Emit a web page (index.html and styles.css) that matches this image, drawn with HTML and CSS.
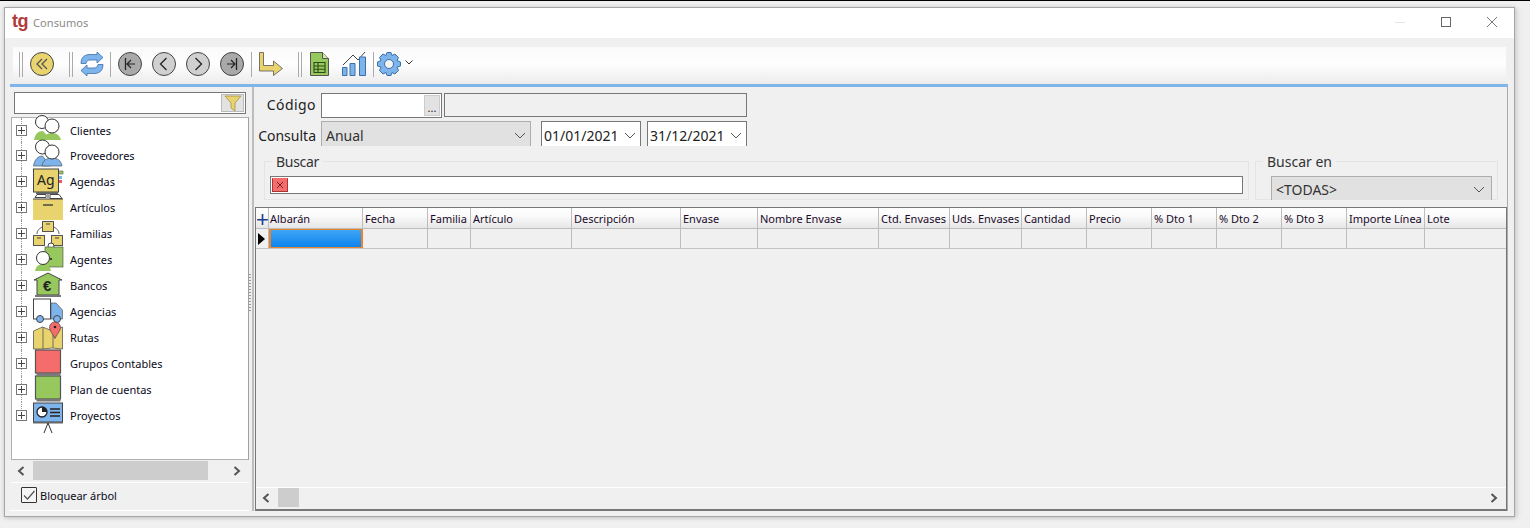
FILE: index.html
```html
<!DOCTYPE html>
<html lang="es">
<head>
<meta charset="utf-8">
<title>Consumos</title>
<link rel="stylesheet" href="styles.css">
</head>
<body>
<div class="window">
  <header class="titlebar">
    <span class="logo">tg</span><span class="title">Consumos</span>
    <div class="winctrls">
      <svg class="wc" width="12" height="12" viewBox="0 0 12 12"><path d="M1 6.500h10" stroke="#e2e2e2"/></svg>
      <svg class="wc" width="12" height="12" viewBox="0 0 12 12"><rect x="1.500" y="1.500" width="9" height="9" fill="none" stroke="#666"/></svg>
      <svg class="wc" width="12" height="12" viewBox="0 0 12 12"><path d="M1 1l10 10M11 1L1 11" stroke="#777" fill="none"/></svg>
    </div>
  </header>
  <div class="content">
    <div class="toolbar">
      <span class="grip"></span>
      <svg class="tb t24 mr" viewBox="0 0 24 24"><circle cx="12" cy="12" r="11.500" fill="#e9d36f" stroke="#444"/><path d="M12 7l-5 5 5 5M17 7l-5 5 5 5" fill="none" stroke="#555" stroke-width="1.300"/></svg>
      <span class="grip"></span>
      <svg class="tb t24" viewBox="0 0 24 24"><path d="M1 11.500C1 5 5 2.500 10 2.500h7V0l6 5.500-6 5.500V8h-7c-2 0-3.500 1-4 3.500z" fill="#7db4ec" stroke="#3d6fa8" stroke-width=".8"/><path d="M23 12.500c0 6.500-4 9-9 9H7V24l-6-5.500L7 13v3h7c2 0 3.500-1 4-3.500z" fill="#7db4ec" stroke="#3d6fa8" stroke-width=".8"/></svg>
      <span class="sep s-a"></span>
      <svg class="tb t24" viewBox="0 0 24 24"><circle cx="12" cy="12" r="11.500" fill="#a9a9a9" stroke="#444"/><path d="M7.500 6v12" stroke="#222" stroke-width="1.300"/><path d="M13 8l-4 4 4 4M9 12h8" fill="none" stroke="#222" stroke-width="1.200"/></svg>
      <svg class="tb t24" viewBox="0 0 24 24"><circle cx="12" cy="12" r="11.500" fill="#d0d0d0" stroke="#444"/><path d="M14.500 6l-6 6 6 6" fill="none" stroke="#222" stroke-width="1.300"/></svg>
      <svg class="tb t24" viewBox="0 0 24 24"><circle cx="12" cy="12" r="11.500" fill="#d0d0d0" stroke="#444"/><path d="M9.500 6l6 6-6 6" fill="none" stroke="#222" stroke-width="1.300"/></svg>
      <svg class="tb t24" viewBox="0 0 24 24"><circle cx="12" cy="12" r="11.500" fill="#a9a9a9" stroke="#444"/><path d="M16.500 6v12" stroke="#222" stroke-width="1.300"/><path d="M11 8l4 4-4 4M7 12h8" fill="none" stroke="#222" stroke-width="1.200"/></svg>
      <span class="sep s-b"></span>
      <svg class="tb t24w" viewBox="0 0 24 24"><path d="M.5.500h4v13h10V9l9 7.500-9 7V19H.5z" fill="#e9d36f" stroke="#555" stroke-width=".8"/></svg>
      <span class="grip g2"></span>
      <svg class="tb t24s" viewBox="0 0 19 24"><path d="M.5.500h12l6 6v17H.5z" fill="#97c85e" stroke="#555"/><path d="M12.500.500v6h6" fill="#cfe6a8" stroke="#555"/><path d="M4 10.500h11v10H4zM4 14h11M4 17.300h11M8 10.500v10" fill="none" stroke="#2e4a14" stroke-width="1.100"/></svg>
      <svg class="tb t24c" viewBox="0 0 24 24"><path d="M1 13L11 3l5 5 7-8" fill="none" stroke="#444"/><path d="M.5 15.500h4.500v8H.5zM8 11.500h5v12H8zM17.500 5h6v18.500h-6z" fill="#7db4ec" stroke="#3d6fa8"/></svg>
      <span class="sep s2"></span>
      <svg class="tb t24g" viewBox="0 0 24 24"><path d="M10 .500h4l1 3 3-1.500 3.500 3.500L20 8.500l3.500 1.500v4L20 15l1.500 3.500-3.500 3.500-3-1.500-1 3h-4l-1-3-3 1.500L2.500 18.500 4 15l-3.500-1v-4L4 8.500 2.500 5.500 6 2l3 1.500z" fill="#7db4ec" stroke="#3d6fa8"/><circle cx="12" cy="12" r="4.500" fill="#f3f3f3" stroke="#3d6fa8"/></svg>
      <svg class="chev-sm" width="8" height="5" viewBox="0 0 8 5"><path d="M.5.500L4 4 7.500.500" fill="none" stroke="#333"/></svg>
    </div>
    <div class="bluebar"></div>
    <div class="main">
      <aside class="left">
        <div class="searchbox">
          <span class="filter"><svg width="18" height="18" viewBox="0 0 18 18"><path d="M1 2h16l-6 7v8l-4-3V9z" fill="#e9d36f" stroke="#9a8a3a" stroke-width=".7"/></svg></span>
        </div>
        <div class="tree">
          <div class="node first"><span class="exp"></span>
            <svg class="ico" viewBox="0 0 30 26"><circle cx="9" cy="5" r="6.500" fill="#fff" stroke="#333"/><path d="M1 23c1-6 4-9 9-9l8 9z" fill="#97c85e"/><path d="M9 23c1-4 5-7 10-7s8 3 9 7z" fill="#97c85e"/><circle cx="19" cy="9" r="7" fill="#fff" stroke="#333"/></svg>
            <span class="lbl">Clientes</span></div>
          <div class="node"><span class="exp"></span>
            <svg class="ico" viewBox="0 0 30 26"><circle cx="9.500" cy="5" r="7" fill="#fff" stroke="#333"/><path d="M.5 24c1-7 5-10 9-10l8 10z" fill="#7db4ec" stroke="#444" stroke-width=".6"/><path d="M9 24c1-6 5-8 10-8s9 2 10 8z" fill="#7db4ec" stroke="#444" stroke-width=".6"/><circle cx="19" cy="10" r="7" fill="#fff" stroke="#333"/></svg>
            <span class="lbl">Proveedores</span></div>
          <div class="node"><span class="exp"></span>
            <svg class="ico" viewBox="0 0 30 26"><rect x="25" y="3" width="5" height="3" fill="#97c85e" stroke="#444" stroke-width=".5"/><rect x="25" y="8" width="4" height="3" fill="#7db4ec"/><rect x="25" y="12" width="4" height="3" fill="#e56"/><rect x=".5" y="1" width="25" height="23" fill="#e9d36f" stroke="#444"/><rect x="3" y="24" width="22" height="2" fill="#666"/><text x="4" y="17" class="ag">Ag</text></svg>
            <span class="lbl">Agendas</span></div>
          <div class="node"><span class="exp"></span>
            <svg class="ico" viewBox="0 0 30 26"><path d="M4 .500h9v3H2zM17 .500h9l3 4H17z" fill="#fff" stroke="#444"/><path d="M15 0v4" stroke="#444"/><rect y="5" width="30" height="21" fill="#e9d36f"/><path d="M0 5h30" stroke="#444"/><path d="M10 11h10" stroke="#333" stroke-width="1.300"/></svg>
            <span class="lbl">Artículos</span></div>
          <div class="node"><span class="exp"></span>
            <svg class="ico" viewBox="0 0 30 26"><path d="M9 7c-3 2-5 3-5 7M21 7c3 2 5 3 5 7" fill="none" stroke="#666"/><rect x="9.500" y="1.500" width="11" height="10" fill="#e9d36f" stroke="#555"/><rect x=".5" y="15.500" width="11" height="10" fill="#e9d36f" stroke="#555"/><rect x="18.500" y="15.500" width="11" height="10" fill="#e9d36f" stroke="#555"/><path d="M13 4h4M4 18h4M22 18h4" stroke="#444"/></svg>
            <span class="lbl">Familias</span></div>
          <div class="node"><span class="exp"></span>
            <svg class="ico" viewBox="0 0 30 26"><circle cx="18" cy="0" r="3" fill="#fff" stroke="#444"/><rect x="12" y="1" width="18" height="20" fill="#97c85e" stroke="#444" stroke-width=".6"/><circle cx="18" cy="13" r="1" fill="#222"/><path d="M2 25c1-5 4-7 8-7s7 2 8 7z" fill="#97c85e"/><circle cx="10" cy="12" r="6.500" fill="#fff" stroke="#333"/></svg>
            <span class="lbl">Agentes</span></div>
          <div class="node"><span class="exp"></span>
            <svg class="ico" viewBox="0 0 30 26"><path d="M15 1L1 8h3v15h22V8h3z" fill="#97c85e" stroke="#444"/><rect x="2" y="23" width="26" height="2" fill="#777"/><text x="10" y="19" class="eur">€</text></svg>
            <span class="lbl">Bancos</span></div>
          <div class="node"><span class="exp"></span>
            <svg class="ico" viewBox="0 0 30 26"><rect x=".5" y="1" width="17" height="20" fill="#fff" stroke="#444"/><path d="M18 5h5l6.500 7v9H18z" fill="#7db4ec" stroke="#444" stroke-width=".6"/><circle cx="7" cy="21" r="3.500" fill="#7db4ec" stroke="#444"/><circle cx="24" cy="21" r="3.500" fill="#7db4ec" stroke="#444"/></svg>
            <span class="lbl">Agencias</span></div>
          <div class="node"><span class="exp"></span>
            <svg class="ico" viewBox="0 0 30 26"><path d="M.5 7l9-4 10 4 10-4v22l-10-1-10 1-9 0z" fill="#e9d36f" stroke="#444" stroke-width=".7"/><path d="M10 3v22M20 7v17" stroke="#444" stroke-width=".7"/><path d="M22 -2a5.500 5.500 0 0 1 5.500 5.500c0 3-3 6-5.500 11-2.500-5-5.500-8-5.500-11A5.500 5.500 0 0 1 22-2z" fill="#f56c6c" stroke="#444" stroke-width=".7"/><circle cx="22" cy="3" r="1.300" fill="#222"/></svg>
            <span class="lbl">Rutas</span></div>
          <div class="node"><span class="exp"></span>
            <svg class="ico" viewBox="0 0 30 26"><rect x="2.500" y="0" width="25" height="23" fill="#f56c6c" stroke="#555" stroke-width="1.200"/><rect x="3.500" y="23" width="24" height="2.500" fill="#777"/></svg>
            <span class="lbl">Grupos Contables</span></div>
          <div class="node"><span class="exp"></span>
            <svg class="ico" viewBox="0 0 30 26"><rect x="2.500" y="0" width="25" height="23" fill="#97c85e" stroke="#555" stroke-width="1.200"/><rect x="3.500" y="23" width="24" height="2.500" fill="#777"/></svg>
            <span class="lbl">Plan de cuentas</span></div>
          <div class="node"><span class="exp"></span>
            <svg class="ico tall" viewBox="0 0 30 32"><rect x=".5" y="1" width="29" height="19" fill="#7db4ec" stroke="#444"/><rect x="0" y="20" width="30" height="1.500" fill="#666"/><circle cx="9" cy="10" r="5" fill="#fff" stroke="#222" stroke-width="1.300"/><path d="M9 10V5a5 5 0 0 1 5 5z" fill="#222"/><path d="M17 7h10M17 10.500h10M17 14h10" stroke="#222" stroke-width="1.300"/><path d="M15 21l-4 10M15 21l4 10" stroke="#333"/></svg>
            <span class="lbl">Proyectos</span></div>
        </div>
        <div class="hscroll tree-scroll">
          <svg class="arrow" width="8" height="10" viewBox="0 0 8 10"><path d="M6.500 1L2 5l4.500 4" fill="none" stroke="#555" stroke-width="2"/></svg>
          <span class="thumb wide"></span>
          <span class="fill"></span>
          <svg class="arrow" width="8" height="10" viewBox="0 0 8 10"><path d="M1.500 1L6 5 1.500 9" fill="none" stroke="#555" stroke-width="2"/></svg>
        </div>
        <label class="lock"><span class="check"><svg width="14" height="14" viewBox="0 0 14 14"><path d="M2 7.500l3.500 3.500L12.500 3" fill="none" stroke="#555" stroke-width="1.200"/></svg></span>Bloquear árbol</label>
      </aside>
      <div class="splitter"><span class="dots"></span></div>
      <section class="right">
        <div class="filters">
          <div class="row row1">
            <span class="f-label l1">Código</span>
            <div class="codebox"><span class="dotsbtn">...</span></div>
            <div class="desc"></div>
          </div>
          <div class="row row2">
            <span class="f-label l2">Consulta</span>
            <div class="combo c-anual"><span>Anual</span><svg class="chev" width="12" height="7" viewBox="0 0 12 7"><path d="M1 1l5 5 5-5" fill="none" stroke="#555"/></svg></div>
            <div class="date d1"><span>01/01/2021</span><svg class="chev" width="12" height="7" viewBox="0 0 12 7"><path d="M1 1l5 5 5-5" fill="none" stroke="#555"/></svg></div>
            <div class="date"><span>31/12/2021</span><svg class="chev" width="12" height="7" viewBox="0 0 12 7"><path d="M1 1l5 5 5-5" fill="none" stroke="#555"/></svg></div>
          </div>
          <div class="groups">
            <div class="group g-buscar">
              <span class="legend">Buscar</span>
              <div class="searchfield"><span class="xbtn"><svg width="8" height="8" viewBox="0 0 8 8"><path d="M1 1l6 6M7 1L1 7" stroke="#6b2222"/></svg></span></div>
            </div>
            <div class="group g-en">
              <span class="legend">Buscar en</span>
              <div class="combo c-todas"><span>&lt;TODAS&gt;</span><svg class="chev" width="12" height="7" viewBox="0 0 12 7"><path d="M1 1l5 5 5-5" fill="none" stroke="#555"/></svg></div>
            </div>
          </div>
        </div>
        <div class="grid">
          <div class="cells head">
            <div class="c c0 plus">+</div>
            <div class="c c1">Albarán</div><div class="c">Fecha</div><div class="c">Familia</div><div class="c">Artículo</div><div class="c">Descripción</div><div class="c">Envase</div><div class="c">Nombre Envase</div><div class="c">Ctd. Envases</div><div class="c">Uds. Envases</div><div class="c">Cantidad</div><div class="c">Precio</div><div class="c">% Dto 1</div><div class="c">% Dto 2</div><div class="c">% Dto 3</div><div class="c">Importe Línea</div><div class="c last">Lote</div>
          </div>
          <div class="cells datarow">
            <div class="c c0"><span class="marker"></span></div>
            <div class="c sel"></div><div class="c"></div><div class="c"></div><div class="c"></div><div class="c"></div><div class="c"></div><div class="c"></div><div class="c"></div><div class="c"></div><div class="c"></div><div class="c"></div><div class="c"></div><div class="c"></div><div class="c"></div><div class="c"></div><div class="c last"></div>
          </div>
          <div class="grid-body"></div>
          <div class="hscroll grid-scroll">
            <svg class="arrow" width="8" height="10" viewBox="0 0 8 10"><path d="M6.500 1L2 5l4.500 4" fill="none" stroke="#555" stroke-width="2"/></svg>
            <span class="thumb small"></span>
            <span class="fill"></span>
            <svg class="arrow" width="8" height="10" viewBox="0 0 8 10"><path d="M1.500 1L6 5 1.500 9" fill="none" stroke="#555" stroke-width="2"/></svg>
          </div>
        </div>
      </section>
    </div>
  </div>
</div>
</body>
</html>
```

FILE: styles.css
```css
* { box-sizing: border-box; }
html, body { margin: 0; height: 100%; }
body {
  background: #f0f0f0;
  border-top: 1px solid #000;
  padding: 6px 15px 10px 4px;
  font-family: "Noto Sans", "Open Sans", sans-serif;
  color: #111;
  overflow: hidden;
  height: 528px;
}
.window {
  height: 510px;
  display: flex;
  flex-direction: column;
  background: #f0f0f0;
  border: 1px solid #a6a6a6;
  box-shadow: 0 1px 4px rgba(0,0,0,.18), 4px 0 6px rgba(0,0,0,.06);
}
.titlebar {
  height: 30px;
  flex: none;
  background: #fff;
  display: flex;
  align-items: center;
  padding: 0 0 1px 7px;
}
.logo {
  font: bold 18px/18px "Liberation Sans", sans-serif;
  letter-spacing: -.5px;
  color: #b13a3a;
  margin-top: -4px;
  width: 21px;
}
.title { font-size: 11px; color: #8a8a8a; letter-spacing: .1px; }
.winctrls { margin-left: auto; display: flex; gap: 34px; padding-right: 16px; margin-top: -1px; }
.wc { display: block; }
.content { flex: 1; min-height: 0; display: flex; flex-direction: column; padding: 9px 6px 5px 5px; }
.toolbar {
  height: 37px;
  flex: none;
  margin: 0 2px 0 3px;
  background: linear-gradient(#fafafa, #fefefe 45%, #ececec);
  display: flex;
  align-items: center;
  padding: 0 0 3px 6px;
}
.grip { width: 4px; height: 25px; border-left: 1px solid #aaa; border-right: 1px solid #aaa; margin-right: 7px; flex: none; }
.sep { width: 1px; height: 25px; background: #aaa; flex: none; margin: 0 7px; }
.tb { display: block; flex: none; }
.t24 { width: 24px; height: 24px; margin-right: 10px; }
.t24.mr { margin-right: 15px; }
.s-a { margin-left: -4px; }
.s-b { margin-left: -3px; }
.t24w { width: 24px; height: 24px; margin-right: 15px; }
.g2 { margin-right: 8px; }
.t24s { width: 19px; height: 24px; margin-right: 13px; }
.t24c { width: 24px; height: 24px; margin-right: 2px; }
.s2 { margin: 0 3px 0 5px; }
.t24g { width: 24px; height: 24px; margin-right: 4px; }
.chev-sm { display: block; margin-top: -3px; }
.bluebar { height: 3px; flex: none; background: #7fb5ea; }
.main { flex: 1; min-height: 0; display: flex; }
.left { width: 239px; flex: none; display: flex; flex-direction: column; border-bottom: 1px solid #fff; }
.searchbox {
  height: 22px;
  margin: 5px 3px 3px 4px;
  flex: none;
  background: #fff;
  border: 1px solid #777;
  display: flex;
  justify-content: flex-end;
  padding: 1px;
}
.filter { width: 23px; background: #e2e2e2; border: 1px solid #bbb; display: flex; align-items: center; justify-content: center; }
.tree {
  margin-left: 1px;
  height: 343px;
  flex: none;
  background: #fff;
  border: 1px solid #b0b0b0;
  border-right-color: #a0a0a0;
}
.node { height: 26px; display: flex; align-items: center; padding-left: 4px; position: relative; }
.node.first { height: 24px; }
.node::before {
  content: "";
  position: absolute;
  left: 9px;
  top: 0;
  height: 26px;
  border-left: 1px dotted #999;
}
.node:last-child::before { height: 13px; }
.exp {
  position: relative;
  width: 11px;
  height: 11px;
  flex: none;
  background: #fff;
  border: 1px solid #777;
  margin-right: 6px;
  z-index: 1;
}
.exp::before { content: ""; position: absolute; left: 1px; right: 1px; top: 4px; height: 1px; background: #444; }
.exp::after { content: ""; position: absolute; top: 1px; bottom: 1px; left: 4px; width: 1px; background: #444; }
.ico { width: 30px; height: 26px; flex: none; overflow: visible; margin-right: 7px; position: relative; z-index: 1; }
.ico.tall { height: 32px; margin-top: 6px; }
.ag { font: 14px "Noto Sans", sans-serif; fill: #222; }
.eur { font: bold 15px "Liberation Sans", sans-serif; fill: #222; }
.lbl { font-size: 11px; color: #0a0a1a; white-space: nowrap; }
.hscroll { display: flex; align-items: center; flex: none; background: #f0f0f0; }
.arrow { flex: none; display: block; }
.thumb { background: #cdcdcd; display: block; flex: none; }
.fill { flex: 1; }
.tree-scroll { margin-left: 1px; height: 23px; padding: 0 8px 1px 6px; border-bottom: 1px solid #fff; }
.thumb.wide { width: 175px; height: 19px; margin-left: 8px; }
.lock { display: flex; align-items: center; font-size: 11px; padding: 0 0 3px 11px; flex: 1; color: #0a0a1a; }
.check {
  width: 16px; height: 16px; border: 1px solid #333; background: #f4f4f4;
  margin-right: 3px; display: flex; align-items: center; justify-content: center; border-radius: 1px;
}
.splitter { width: 5px; flex: none; background: #f0f0f0; border-right: 2px solid #bdbdbd; display: flex; align-items: center; justify-content: center; }
.dots { width: 2px; height: 38px; background: repeating-linear-gradient(#999 0 1px, transparent 1px 3px); margin-top: -12px; margin-left: -2px; }
.right { flex: 1; min-width: 0; display: flex; flex-direction: column; border-right: 1px solid #aaa; }
.filters { height: 120px; flex: none; font-size: 14px; }
.row { display: flex; }
.row1 { height: 25px; margin-top: 6px; align-items: flex-start; }
.f-label { flex: none; text-align: right; color: #222; line-height: 24px; }
.l1 { width: 62px; letter-spacing: .45px; }
.l2 { width: 62px; line-height: 29px; }
.codebox {
  width: 121px; height: 25px; margin-left: 5px;
  background: #fff; border: 1px solid #777;
  display: flex; justify-content: flex-end; padding: 1px;
}
.dotsbtn { width: 16px; background: #e2e2e2; border: 1px solid #ccc; font-size: 11px; line-height: 24px; text-align: center; color: #222; }
.desc { width: 303px; height: 24px; margin-left: 2px; border: 1px solid #777; background: #f0f0f0; }
.row2 { height: 25px; margin-top: 3px; }
.combo {
  display: flex; align-items: center; justify-content: space-between;
  background: #e1e1e1; border: 1px solid #adadad; border-bottom: 0;
}
.combo span { color: #333; }
.c-anual { width: 210px; height: 25px; margin-left: 5px; padding: 3px 4px 0; }
.date {
  width: 100px; height: 25px; background: #fff;
  border: 1px solid #777; border-bottom: 0;
  display: flex; align-items: center; justify-content: space-between;
  padding: 3px 4px 0 2px; margin-left: 6px; color: #222;
}
.date.d1 { margin-left: 10px; }
.chev { flex: none; display: block; margin-right: 0; }
.groups { display: flex; height: 47px; margin-top: 7px; padding-left: 10px; gap: 6px; align-items: flex-start; }
.group { position: relative; height: 39px; margin-top: 8px; border: 1px solid #e4e4e4; flex: none; }
.legend {
  position: absolute; left: 7px; top: -10px;
  background: #f0f0f0; padding: 0 4px; line-height: 20px; color: #333; letter-spacing: -.3px;
}
.g-buscar { width: 985px; padding: 14px 5px 0 5px; }
.g-en { width: 243px; padding: 14px 5px 0 15px; }
.g-en .legend { left: 7px; letter-spacing: 0; }
.searchfield { height: 18px; background: #fff; border: 1px solid #777; padding: 1px; display: flex; }
.xbtn { width: 16px; height: 14px; background: #f56c6c; border: 1px solid #a33; border-top-color: #f56c6c; display: flex; align-items: center; justify-content: center; }
.c-todas { height: 24px; padding: 2px 6px 0 4px; }
.grid {
  flex: 1; min-height: 0;
  display: flex; flex-direction: column;
  margin: 0 0 0 1px;
  border: 1px solid #777;
  border-bottom-width: 2px;
  background: #f0f0f0;
}
.cells {
  display: grid;
  grid-template-columns: 13px 94px 65px 43px 101px 109px 77px 121px 71px 72px 65px 65px 65px 65px 65px 78px 1fr;
  flex: none;
}
.c0 { border-right: 1px solid #c6c6c6; }
.c { border-right: 1px solid #bdbdbd; font-size: 11px; padding-left: 2px; white-space: nowrap; overflow: hidden; color: #1a0a2a; }
.c.c1 { padding-left: 1px; }
.c.last { border-right: 0; }
.head { height: 21px; border-bottom: 1px solid #bdbdbd; background: linear-gradient(#fff, #fafafa 40%, #e6e6e6); }
.head .c { line-height: 22px; }
.c.plus { font: 22px/23px "Liberation Sans", sans-serif; color: #1c3f94; padding: 0; text-align: center; overflow: visible; }
.datarow { height: 20px; border-bottom: 1px solid #c4c4c4; }
.marker { display: block; margin: 4px 0 0 2px; width: 0; height: 0; border-left: 7px solid #000; border-top: 6px solid transparent; border-bottom: 6px solid transparent; }
.datarow .c0 { padding: 0; }
.sel { background: linear-gradient(#3fa6f6, #0d84ee); border: 1px solid #e8842c; border-right-width: 2px; border-left-width: 2px; }
.grid-body { flex: 1; min-height: 0; border-bottom: 1px solid #fff; }
.grid-scroll { height: 21px; padding: 0 8px 2px 6px; }
.thumb.small { width: 21px; height: 19px; margin-left: 8px; }
```
